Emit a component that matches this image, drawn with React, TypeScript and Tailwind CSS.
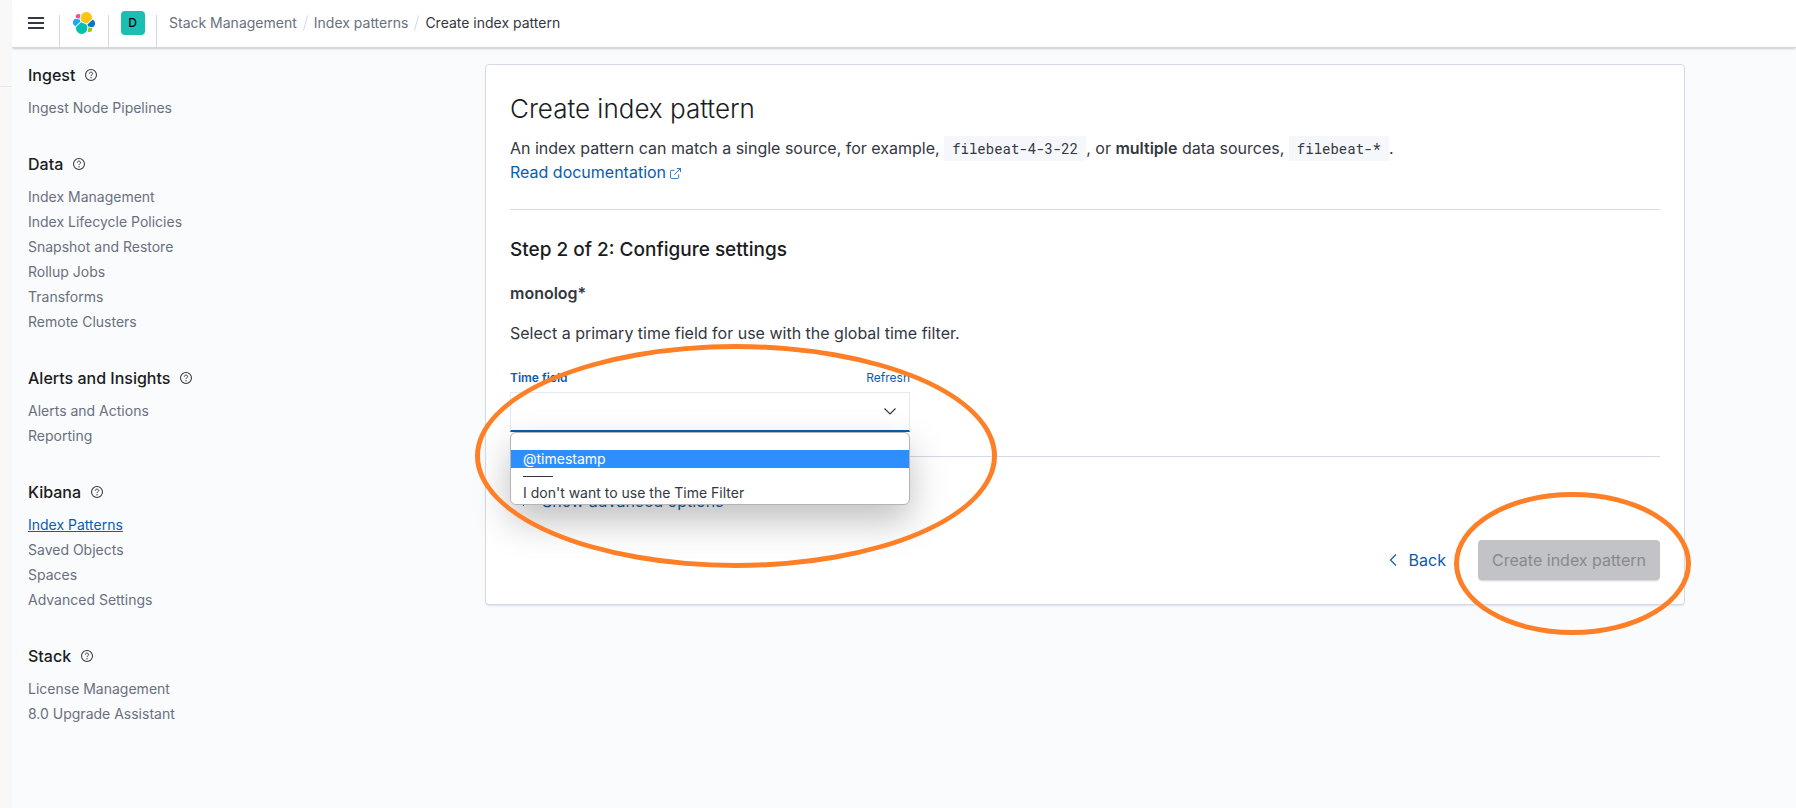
import { useState } from "react";

type NavSection = { title: string; items: string[] };

const SECTIONS: NavSection[] = [
  { title: "Ingest", items: ["Ingest Node Pipelines"] },
  {
    title: "Data",
    items: [
      "Index Management",
      "Index Lifecycle Policies",
      "Snapshot and Restore",
      "Rollup Jobs",
      "Transforms",
      "Remote Clusters",
    ],
  },
  { title: "Alerts and Insights", items: ["Alerts and Actions", "Reporting"] },
  { title: "Kibana", items: ["Index Patterns", "Saved Objects", "Spaces", "Advanced Settings"] },
  { title: "Stack", items: ["License Management", "8.0 Upgrade Assistant"] },
];

function ElasticLogo() {
  return (
    <svg viewBox="0 0 32 32" className="size-6" aria-hidden="true">
      <path fill="#FEC514" d="M12.58 13.787l7.002 3.211 7.066-6.213a7.849 7.849 0 00.152-1.557c0-4.287-3.471-7.762-7.752-7.762-2.564 0-4.953 1.273-6.397 3.402L11.475 11.02z" />
      <path fill="#00BFB3" d="M5.333 21.228c-.095.502-.142 1.02-.142 1.54 0 4.304 3.49 7.807 7.78 7.807a7.794 7.794 0 006.446-3.416l1.165-6.101-1.556-2.985-7.03-3.214z" />
      <path fill="#F04E98" d="M5.288 9.067l4.8 1.137L11.14 4.72a3.812 3.812 0 00-2.318-.788 3.827 3.827 0 00-3.815 3.83c0 .44.076.876.28 1.295z" />
      <path fill="#1BA9F5" d="M4.872 10.214C2.73 10.926 1.23 12.998 1.23 15.26c0 2.202 1.361 4.17 3.404 4.948l6.733-6.117-1.236-2.651z" />
      <path fill="#93C90E" d="M20.872 27.184a3.784 3.784 0 002.309.79 3.827 3.827 0 003.815-3.83c0-.454-.08-.891-.237-1.292l-4.796-1.129z" />
      <path fill="#0077CC" d="M21.848 20.563l5.28 1.237c2.143-.715 3.644-2.787 3.644-5.05 0-2.193-1.359-4.15-3.4-4.937l-6.904 6.062z" />
    </svg>
  );
}

function HelpIcon() {
  return (
    <svg viewBox="0 0 16 16" className="size-3 shrink-0" fill="none" stroke="#343741" aria-hidden="true">
      <circle cx="8" cy="8" r="7.3" strokeWidth="1.4" />
      <path d="M5.8 6.2C5.8 4.9 6.7 4.2 8 4.2s2.2.8 2.2 1.9c0 1.7-2.2 1.6-2.2 3.3" strokeWidth="1.3" />
      <circle cx="8" cy="11.6" r=".9" fill="#343741" stroke="none" />
    </svg>
  );
}

function ExternalIcon() {
  return (
    <svg viewBox="0 0 12 12" className="ml-1 inline size-[11px] align-[-1px]" fill="none" stroke="currentColor" strokeWidth=".9" aria-hidden="true">
      <path d="M5 2.5H2A1.5 1.5 0 0 0 .5 4v6A1.5 1.5 0 0 0 2 11.5h6A1.5 1.5 0 0 0 9.5 10V7M7.5.5h4v4M11.5.5l-7 7" />
    </svg>
  );
}

function Highlight({ className }: { className: string }) {
  return <span aria-hidden="true" className={`pointer-events-none absolute z-20 rounded-[50%] border-[#ff7f27] ${className}`} />;
}

function Header() {
  return (
    <header className="relative z-10 flex h-12 items-end border-b border-[#d3d7e6] bg-white pl-4 shadow-[0_2px_2px_-1px_rgba(52,55,65,0.25)]">
      <button type="button" aria-label="Toggle primary navigation" className="flex h-full w-[31px] items-center pb-px">
        <svg viewBox="0 0 16 12" className="h-3 w-4" fill="#343741" aria-hidden="true">
          <path d="M0 0h16v2H0zM0 5h16v2H0zM0 10h16v2H0z" />
        </svg>
      </button>
      <div className="h-8 w-px bg-[#d3d7e6]" />
      <a href="#home" aria-label="Elastic" className="flex h-full w-12 items-center justify-center pb-px">
        <ElasticLogo />
      </a>
      <div className="h-8 w-px bg-[#d3d7e6]" />
      <button type="button" aria-label="Default space" className="flex h-full w-[47px] items-center justify-center pb-px">
        <span className="flex size-6 items-center justify-center rounded bg-[#1abfb3] text-xs font-medium text-black">D</span>
      </button>
      <div className="h-8 w-px bg-[#d3d7e6]" />
      <nav aria-label="Breadcrumb" className="flex h-full items-center gap-2 pb-px pl-3 text-sm text-[#69707d]">
        <a href="#management">Stack Management</a>
        <span className="h-4 w-px rotate-[15deg] bg-[#d3dae6]" />
        <a href="#patterns">Index patterns</a>
        <span className="h-4 w-px rotate-[15deg] bg-[#d3dae6]" />
        <span className="text-[#343741]" aria-current="page">Create index pattern</span>
      </nav>
    </header>
  );
}

function Sidebar() {
  return (
    <nav aria-label="Management" className="flex w-[362px] shrink-0 flex-col gap-8 pl-4 pt-[15px]">
      {SECTIONS.map((section) => (
        <section key={section.title}>
          <h2 className="mb-2 flex items-center gap-2.5 text-base font-medium text-[#1a1c21]">
            {section.title}
            <HelpIcon />
          </h2>
          <ul className="text-sm">
            {section.items.map((item) => (
              <li key={item} className="h-[25px] leading-[25px]">
                <a
                  href="#section"
                  className={item === "Index Patterns" ? "text-[#0a5cad] underline" : "text-[#69707d]"}
                >
                  {item}
                </a>
              </li>
            ))}
          </ul>
        </section>
      ))}
    </nav>
  );
}

function TimeField() {
  const [value, setValue] = useState("");
  return (
    <div className="relative w-[400px]">
      <div className="flex h-6 items-center justify-between text-xs text-[#0a5cad]">
        <label htmlFor="time-field" className="font-semibold">Time field</label>
        <button type="button">Refresh</button>
      </div>
      <div className="relative mt-0.5">
        <select
          id="time-field"
          value={value}
          onChange={(event) => setValue(event.target.value)}
          className="block h-10 w-full appearance-none border border-b-2 border-[#e6e8f2] border-b-[#0a5cad] bg-white px-3 text-sm outline-none"
        >
          <option value="" />
          <option value="@timestamp">@timestamp</option>
          <option value="none">I don't want to use the Time Filter</option>
        </select>
        <svg viewBox="0 0 12 7" className="pointer-events-none absolute right-3.5 top-4 h-[7px] w-3" fill="none" stroke="#343741" strokeWidth="1.2" aria-hidden="true">
          <path d="M.5.5 6 6 11.5.5" />
        </svg>
      </div>
      <ul
        role="listbox"
        aria-label="Time field options"
        className="absolute left-0 top-full z-10 w-full rounded-md border border-[#b4b4b8] bg-white text-sm leading-[18px] text-[#343741] shadow-[0_16px_36px_rgba(0,0,0,0.25)]"
      >
        <li role="option" aria-selected="false" className="h-[17px]" />
        <li role="option" aria-selected="true" className="h-[18px] bg-[#2f8eff] px-3 text-white">@timestamp</li>
        <li role="separator" className="flex h-4 items-center px-3">
          <span className="h-px w-[30px] bg-[#343741]" />
        </li>
        <li role="option" aria-selected="false" className="h-5 px-3">I don't want to use the Time Filter</li>
      </ul>
      <Highlight className="-left-[35px] -top-[22px] h-56 w-[522px] border-[5px]" />
    </div>
  );
}

function CodeChip({ children }: { children: string }) {
  return (
    <code className="bg-[#f5f7fa] px-2 py-[3px] font-['Roboto_Mono','Liberation_Mono',monospace] text-sm">{children}</code>
  );
}

function CreatePanel() {
  return (
    <main className="w-full max-w-[1200px] rounded border border-[#d3dae6] bg-white p-6 shadow-[0_2px_2px_-1px_rgba(152,162,179,0.3)]">
      <h1 className="text-[26px] font-light leading-10 text-[#1a1c21]">Create index pattern</h1>
      <p className="mt-[7px]">
        An index pattern can match a single source, for example, <CodeChip>filebeat-4-3-22</CodeChip>, or{" "}
        <strong className="font-semibold">multiple</strong> data sources, <CodeChip>filebeat-*</CodeChip>.
        <br />
        <a href="#docs" className="text-[#0a5cad]">
          Read documentation
          <ExternalIcon />
        </a>
      </p>
      <hr className="mb-6 mt-[25px] border-[#d3dae6]" />
      <h2 className="text-[19px] font-medium leading-8 text-[#1a1c21]">Step 2 of 2: Configure settings</h2>
      <p className="mt-[15px] font-semibold">monolog*</p>
      <p className="mb-[21px] mt-4">Select a primary time field for use with the global time filter.</p>
      <TimeField />
      <hr className="my-6 border-[#d3dae6]" />
      <button type="button" className="flex h-10 items-center gap-3 px-3 text-[#0a5cad]">
        <svg viewBox="0 0 8 12" className="h-3 w-2" fill="none" stroke="currentColor" aria-hidden="true">
          <path d="M1 1l5 5-5 5" />
        </svg>
        Show advanced options
      </button>
      <div className="mt-[19px] flex items-center justify-end gap-8">
        <button type="button" className="flex h-10 items-center gap-3 text-[#0a5cad]">
          <svg viewBox="0 0 8 12" className="h-3 w-2" fill="none" stroke="currentColor" strokeWidth="1.2" aria-hidden="true">
            <path d="M7 .5 1.5 6 7 11.5" />
          </svg>
          Back
        </button>
        <div className="relative">
          <button type="button" disabled className="block h-10 rounded bg-[#c2c3c6] px-3.5 text-[#89898d] shadow-[0_2px_2px_-1px_rgba(0,0,0,0.2)]">
            Create index pattern
          </button>
          <Highlight className="-bottom-[55px] -left-6 -right-[31px] -top-12 border-[5px]" />
        </div>
      </div>
    </main>
  );
}

export default function App() {
  return (
    <div className="flex min-h-screen bg-[#fafbfd] font-['Inter',sans-serif] text-base text-[#343741]">
      <div className="w-3 shrink-0 bg-[#f8f8f8]">
        <div className="h-[87px] border-b border-[#e8e8ea]" />
      </div>
      <div className="min-w-0 flex-1">
        <Header />
        <div className="flex">
          <Sidebar />
          <div className="flex min-w-0 flex-1 items-start justify-center px-4 pt-4">
            <CreatePanel />
          </div>
        </div>
      </div>
    </div>
  );
}
